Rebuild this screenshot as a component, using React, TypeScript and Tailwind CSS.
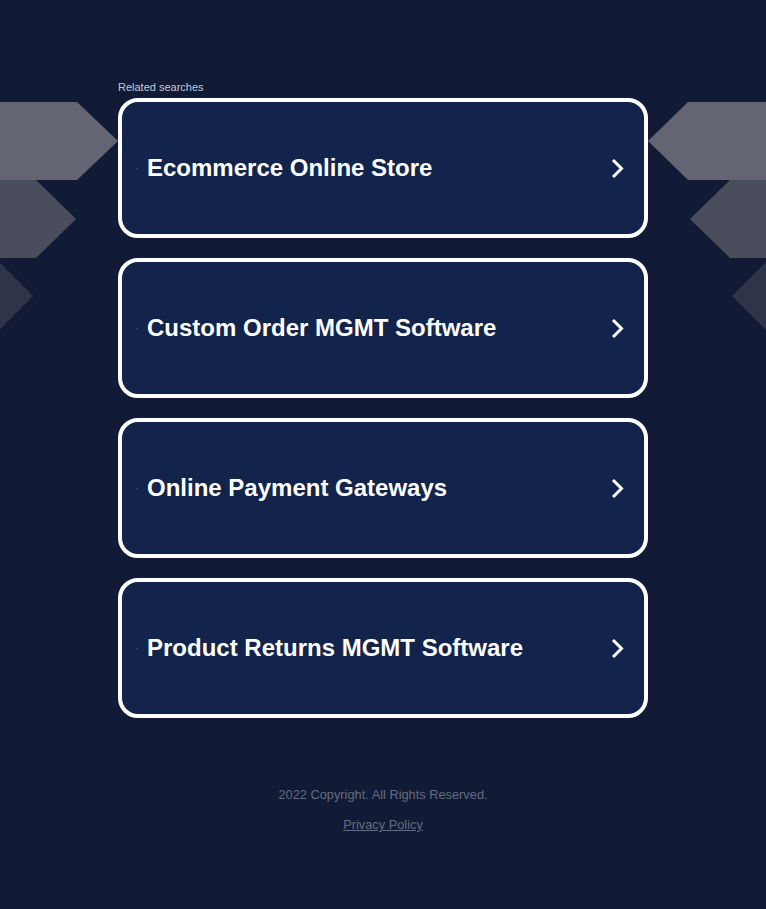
const searches = [
  "Ecommerce Online Store",
  "Custom Order MGMT Software",
  "Online Payment Gateways",
  "Product Returns MGMT Software",
];

const SearchCard = ({ title }: { title: string }) => {
  return (
    <a
      href="#"
      className="flex h-[140px] items-center justify-between rounded-[20px] border-4 border-white bg-[#12244b] pl-[14px] pr-[20px]"
    >
      <div className="flex items-center">
        <span className="mr-[10px] h-px w-px bg-[#4d5d82]" />
        <span className="text-[24px] font-bold leading-7 text-white">{title}</span>
      </div>
      <svg width="13" height="21" viewBox="0 0 13 21" fill="none">
        <path d="M2 2 L10.5 10.5 L2 19" stroke="white" strokeWidth="3" />
      </svg>
    </a>
  );
};

const App = () => {
  return (
    <div className="relative min-h-[909px] w-full overflow-hidden bg-[#111b36] font-['Liberation_Sans',Arial,sans-serif]">
      {/* side decorations */}
      <svg className="absolute left-0 top-[102px]" width="120" height="240" viewBox="0 0 120 240">
        <polygon points="0,0 77,0 118,39 77,78 0,78" fill="#636572" />
        <polygon points="0,78 36,78 76,117 36,156 0,156" fill="#4a4d5c" />
        <polygon points="-6,155 33,194 -6,233" fill="#30344a" />
      </svg>
      <svg className="absolute left-[646px] top-[102px]" width="120" height="240" viewBox="0 0 120 240">
        <polygon points="2,39 42,0 120,0 120,78 42,78" fill="#636572" />
        <polygon points="44,117 84,78 120,78 120,156 84,156" fill="#4a4d5c" />
        <polygon points="86,194 125,155 125,233" fill="#30344a" />
      </svg>

      <div className="relative mx-auto flex w-[530px] flex-col pt-[80px]">
        <span className="mb-1 text-[11px] leading-[14px] text-[#c3c9d6]">Related searches</span>
        <div className="flex flex-col gap-5">
          {searches.map((s) => (
            <SearchCard key={s} title={s} />
          ))}
        </div>
      </div>

      <div className="relative mt-[69px] flex flex-col items-center gap-[15px] text-[12.8px] leading-[15px] text-[#656c7e]">
        <p>2022 Copyright. All Rights Reserved.</p>
        <a href="#" className="underline">Privacy Policy</a>
      </div>
    </div>
  );
};

export default App;
